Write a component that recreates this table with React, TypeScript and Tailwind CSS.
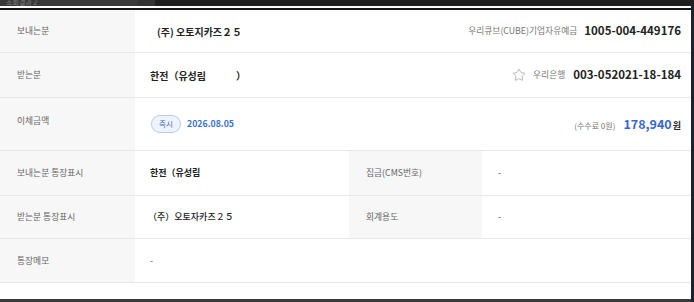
import { Star } from 'lucide-react'

const label = 'flex w-[135px] shrink-0 items-center bg-[#f7f7f7] pl-[17px] text-[8.75px] text-[#666]'

export default function App() {
  return (
    <div className="h-[302px] w-[694px] overflow-hidden bg-white font-['Noto_Sans_CJK_KR','Noto_Sans',sans-serif]">
      {/* cropped header above */}
      <div className="flex h-[6px] bg-[#1f1f1f]">
        <div className="w-[137px] overflow-hidden bg-[#3a3a3a] pl-[6px] text-[7px] leading-[4px] text-[#7a7a7a]">
          조회결과 2
        </div>
        <div className="w-[18px] bg-[#333]" />
      </div>

      <div className="flex">
        <div className="flex-1">
          <div className="h-[2px] bg-white" />
          <div className="h-[2px] bg-[#141414]" />

          {/* 보내는분 */}
          <div className="flex h-[43px] border-b border-[#e8e8e8]">
            <div className={label}>보내는분</div>
            <div className="flex flex-1 items-center justify-between pl-[22px] pr-[10px]">
              <span className="text-[10px] font-bold text-[#222]">(주) 오토지카즈２５</span>
              <div className="flex items-center gap-[7px]">
                <span className="text-[8.75px] text-[#777]">우리큐브(CUBE)기업자유예금</span>
                <span className="text-[11.5px] font-bold text-[#222]">1005-004-449176</span>
              </div>
            </div>
          </div>

          {/* 받는분 */}
          <div className="flex h-[45px] border-b border-[#e8e8e8]">
            <div className={label}>받는분</div>
            <div className="flex flex-1 items-center justify-between pl-[15px] pr-[10px]">
              <span className="text-[10px] font-bold text-[#222]">한전（유성림　　　）</span>
              <div className="flex items-center">
                <Star className="mr-[7px] h-[14px] w-[14px] text-[#9a9a9a]" strokeWidth={1.2} />
                <span className="mr-[8px] text-[8.75px] text-[#777]">우리은행</span>
                <span className="text-[11.5px] font-bold text-[#222]">003-052021-18-184</span>
              </div>
            </div>
          </div>

          {/* 이체금액 */}
          <div className="flex h-[53px] border-b border-[#e8e8e8]">
            <div className="w-[135px] shrink-0 bg-[#f7f7f7] pl-[17px] pt-[17px] text-[8.75px] leading-[12px] text-[#666]">
              이체금액
            </div>
            <div className="flex flex-1 items-center justify-between pl-[16px] pr-[10px]">
              <div className="flex items-center gap-[6px]">
                <span className="flex h-[18px] w-[30px] items-center justify-center rounded-full border border-[#b9cbee] bg-[#eef3fc] text-[7.5px] text-[#3a6bd0]">
                  즉시
                </span>
                <span className="text-[8.75px] font-bold text-[#3a6fd6]">2026.08.05</span>
              </div>
              <div className="flex items-baseline">
                <span className="mr-[8px] text-[8px] text-[#777]">(수수료 0원)</span>
                <span className="text-[12.5px] font-bold text-[#3567d3]">178,940</span>
                <span className="ml-[1px] text-[9px] font-bold text-[#222]">원</span>
              </div>
            </div>
          </div>

          {/* 보내는분 통장표시 */}
          <div className="flex h-[45px] border-b border-[#e8e8e8]">
            <div className={label}>보내는분 통장표시</div>
            <div className="flex w-[214px] items-center pl-[15px] text-[9px] font-bold text-[#222]">한전（유성림</div>
            <div className="flex w-[133px] items-center bg-[#f7f7f7] pl-[17px] text-[8.75px] text-[#666]">집금(CMS번호)</div>
            <div className="flex flex-1 items-center pl-[16px] text-[9px] text-[#444]">-</div>
          </div>

          {/* 받는분 통장표시 */}
          <div className="flex h-[43px] border-b border-[#e8e8e8]">
            <div className={label}>받는분 통장표시</div>
            <div className="flex w-[214px] items-center pl-[13px] text-[9px] font-medium text-[#222]">（주）오토자카즈２５</div>
            <div className="flex w-[133px] items-center bg-[#f7f7f7] pl-[17px] text-[8.75px] text-[#666]">회계용도</div>
            <div className="flex flex-1 items-center pl-[16px] text-[9px] text-[#444]">-</div>
          </div>

          {/* 통장메모 */}
          <div className="flex h-[44px] border-b border-[#e8e8e8]">
            <div className={label}>통장메모</div>
            <div className="flex flex-1 items-center pl-[15px] text-[9px] text-[#666]">-</div>
          </div>

          <div className="h-[16px] bg-white" />
          <div className="h-[3px] bg-[#3a3a3a]" />
        </div>
        <div className="w-[3px] bg-[#1c2131]" />
      </div>
    </div>
  )
}
